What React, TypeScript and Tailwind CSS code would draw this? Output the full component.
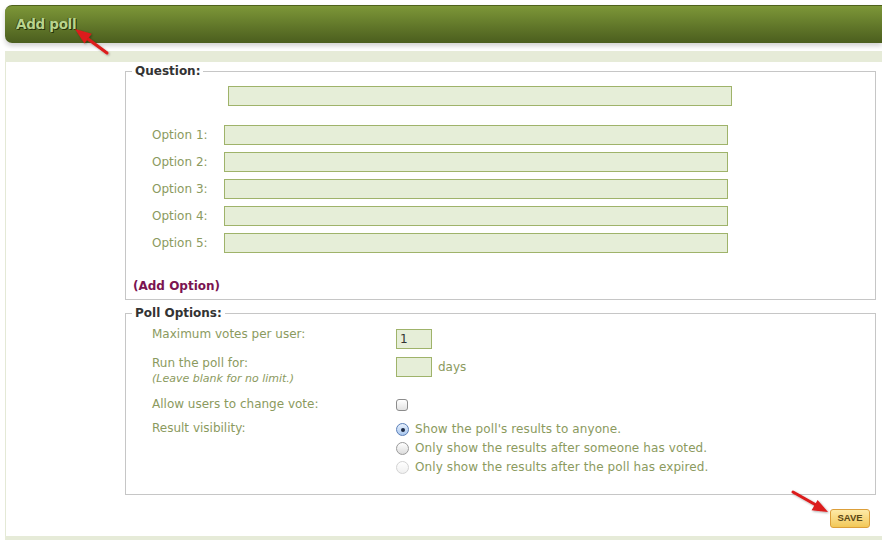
import React from 'react';

const font = "font-['DejaVu_Sans',Verdana,sans-serif]";
const label = 'text-[12px] leading-[15px] text-[#8b9a5e]';
const field = 'h-[20px] border border-[#9fb36a] bg-[#e6eed8] text-[12px] text-[#333] px-[3px] outline-none';
const legend = 'ml-[6px] px-[3px] text-[12px] leading-[16px] font-bold text-[#333]';

const Radio: React.FC<{ checked?: boolean; disabled?: boolean }> = ({ checked, disabled }) => (
  <span
    className={`w-[13px] h-[13px] rounded-full border flex items-center justify-center shrink-0 ${
      checked
        ? 'border-[#5b7fb8] bg-gradient-to-b from-[#e8f1fd] to-[#a9c7ee]'
        : disabled
          ? 'border-[#d3d3d3] bg-gradient-to-b from-white to-[#f0f0f0]'
          : 'border-[#9a9a9a] bg-gradient-to-b from-white to-[#dcdcdc]'
    }`}
  >
    {checked && <span className="w-[4px] h-[4px] rounded-full bg-[#1d2a44]" />}
  </span>
);

const Arrows = () => (
  <svg className="absolute inset-0 pointer-events-none" width="882" height="540" viewBox="0 0 882 540">
    <defs>
      <filter id="arrowShadow" x="-20%" y="-20%" width="140%" height="140%">
        <feDropShadow dx="1" dy="1" stdDeviation="0.8" floodColor="#000" floodOpacity="0.35" />
      </filter>
    </defs>
    <g fill="#dc1a1a" stroke="#dc1a1a" filter="url(#arrowShadow)">
      <line x1="107" y1="53" x2="86" y2="37.5" strokeWidth="3" strokeLinecap="round" />
      <polygon points="75,29 91.6,33.8 84.4,43.4" stroke="none" />
      <line x1="793" y1="492" x2="816" y2="505" strokeWidth="3" strokeLinecap="round" />
      <polygon points="828,512 811.6,510.3 817.6,499.9" stroke="none" />
    </g>
  </svg>
);

export default function App() {
  const options = [1, 2, 3, 4, 5];

  return (
    <div className={`relative w-full h-[540px] overflow-hidden bg-white ${font}`}>
      <div className="pt-[5px] pl-[5px] flex flex-col h-full">
        {/* Title bar */}
        <div className="h-[38px] rounded-l-[7px] border-t border-[#4e611c] bg-gradient-to-b from-[#7d9738] to-[#4b5e1e] shadow-[0_3px_5px_rgba(0,0,0,0.18)] flex items-center pl-[11px]">
          <h1 className="text-[13.5px] font-bold tracking-[-0.3px] text-[#b9d48d] [text-shadow:1px_1px_0_#26330b,-1px_0_0_#3a4a14]">
            Add poll
          </h1>
        </div>

        <div className="mt-[8px] h-[11px] bg-[#e6ebd8]" />

        <div className="flex-1 border-l border-[#e4e9d6] flex flex-col">
          <div className="ml-[119px] w-[751px]">
            {/* Question + options */}
            <fieldset className="mt-[1px] border border-[#c6c6c6] pb-[5px]">
              <legend className={legend}>Question:</legend>
              <input className={`${field} ml-[102px] mt-[7px] w-[504px] block`} />
              <div className="mt-[19px] flex flex-col gap-[7px]">
                {options.map((n) => (
                  <div key={n} className="flex items-center">
                    <span className={`${label} ml-[26px] w-[72px] pt-[1px]`}>Option {n}:</span>
                    <input className={`${field} w-[504px]`} />
                  </div>
                ))}
              </div>
              <div className="mt-[25px] ml-[7px] text-[12px] leading-[16px] font-bold text-[#7b1451]">(Add Option)</div>
            </fieldset>

            {/* Poll settings */}
            <fieldset className="mt-[5px] border border-[#c6c6c6] pb-[17px]">
              <legend className={legend}>Poll Options:</legend>

              <div className="mt-[6px] flex items-start">
                <span className={`${label} ml-[26px] w-[244px]`}>Maximum votes per user:</span>
                <input className={`${field} mt-[2px] w-[36px]`} defaultValue="1" />
              </div>

              <div className="mt-[7px] flex items-start">
                <div className="ml-[26px] w-[244px] flex flex-col">
                  <span className={label}>Run the poll for:</span>
                  <span className="mt-[1px] text-[11px] leading-[13px] italic text-[#8b9a5e]">(Leave blank for no limit.)</span>
                </div>
                <input className={`${field} mt-[1px] w-[36px]`} />
                <span className={`${label} ml-[6px] mt-[4px]`}>days</span>
              </div>

              <div className="mt-[12px] flex items-start">
                <span className={`${label} ml-[26px] w-[244px]`}>Allow users to change vote:</span>
                <span className="mt-[2px] w-[12px] h-[12px] rounded-[3px] border border-[#8c8c8c] bg-gradient-to-b from-white to-[#e2e2e2]" />
              </div>

              <div className="mt-[8px] flex items-start">
                <span className={`${label} ml-[26px] w-[244px] mt-[1px]`}>Result visibility:</span>
                <div className="flex flex-col">
                  {[
                    { text: "Show the poll's results to anyone.", checked: true },
                    { text: 'Only show the results after someone has voted.' },
                    { text: 'Only show the results after the poll has expired.', disabled: true },
                  ].map((o) => (
                    <div key={o.text} className="h-[19px] flex items-center gap-[6px]">
                      <Radio checked={o.checked} disabled={o.disabled} />
                      <span className={`${label} tracking-[0.1px]`}>{o.text}</span>
                    </div>
                  ))}
                </div>
              </div>
            </fieldset>
          </div>

          <div className="mt-[14px] flex justify-end pr-[12px]">
            <button className="w-[40px] h-[19px] rounded-[3px] border border-[#dc9f3a] bg-gradient-to-b from-[#fdeaa6] to-[#f2c857] font-['Liberation_Sans',Arial,sans-serif] text-[9.5px] font-bold text-[#594716] flex items-center justify-center">
              SAVE
            </button>
          </div>
          <div className="flex-1" />
        </div>
        <div className="h-[4px] bg-[#e6ebd8]" />
      </div>
      <Arrows />
    </div>
  );
}
